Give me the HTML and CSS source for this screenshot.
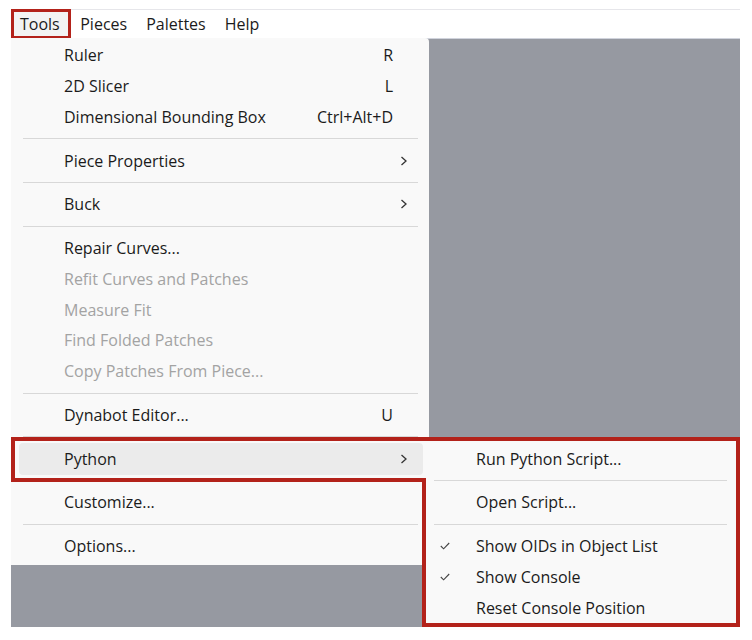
FILE: index.html
```html
<!DOCTYPE html>
<html>
<head>
<meta charset="utf-8">
<link rel="stylesheet" href="styles.css">
</head>
<body>
<div class="window">
  <div class="menubar">
    <div class="mb-item active">Tools</div>
    <div class="mb-item">Pieces</div>
    <div class="mb-item">Palettes</div>
    <div class="mb-item">Help</div>
  </div>
  <div class="canvas">
    <div class="menu">
      <div class="item"><span class="label">Ruler</span><span class="key">R</span><span class="arrow"></span></div>
      <div class="item"><span class="label">2D Slicer</span><span class="key">L</span><span class="arrow"></span></div>
      <div class="item"><span class="label">Dimensional Bounding Box</span><span class="key">Ctrl+Alt+D</span><span class="arrow"></span></div>
      <div class="sep"></div>
      <div class="item"><span class="label">Piece Properties</span><span class="key"></span><span class="arrow"><svg width="8" height="10" viewBox="0 0 8 10"><path d="M1.5 1 L6 5 L1.5 9" fill="none" stroke="#333" stroke-width="1.3"/></svg></span></div>
      <div class="sep"></div>
      <div class="item"><span class="label">Buck</span><span class="key"></span><span class="arrow"><svg width="8" height="10" viewBox="0 0 8 10"><path d="M1.5 1 L6 5 L1.5 9" fill="none" stroke="#333" stroke-width="1.3"/></svg></span></div>
      <div class="sep"></div>
      <div class="item"><span class="label">Repair Curves...</span><span class="key"></span><span class="arrow"></span></div>
      <div class="item disabled"><span class="label">Refit Curves and Patches</span><span class="key"></span><span class="arrow"></span></div>
      <div class="item disabled"><span class="label">Measure Fit</span><span class="key"></span><span class="arrow"></span></div>
      <div class="item disabled"><span class="label">Find Folded Patches</span><span class="key"></span><span class="arrow"></span></div>
      <div class="item disabled"><span class="label">Copy Patches From Piece...</span><span class="key"></span><span class="arrow"></span></div>
      <div class="sep"></div>
      <div class="item"><span class="label">Dynabot Editor...</span><span class="key">U</span><span class="arrow"></span></div>
      <div class="sep"></div>
      <div class="item hover"><span class="label">Python</span><span class="key"></span><span class="arrow"><svg width="8" height="10" viewBox="0 0 8 10"><path d="M1.5 1 L6 5 L1.5 9" fill="none" stroke="#333" stroke-width="1.3"/></svg></span></div>
      <div class="sep"></div>
      <div class="item"><span class="label">Customize...</span><span class="key"></span><span class="arrow"></span></div>
      <div class="sep"></div>
      <div class="item"><span class="label">Options...</span><span class="key"></span><span class="arrow"></span></div>
    </div>
    <div class="submenu">
      <div class="sitem"><span class="check"></span><span class="label">Run Python Script...</span></div>
      <div class="ssep"></div>
      <div class="sitem"><span class="check"></span><span class="label">Open Script...</span></div>
      <div class="ssep"></div>
      <div class="sitem"><span class="check"><svg width="10" height="8" viewBox="0 0 10 8"><path d="M0.8 4 L3.6 6.8 L9.2 1" fill="none" stroke="#444" stroke-width="1.1"/></svg></span><span class="label">Show OIDs in Object List</span></div>
      <div class="sitem"><span class="check"><svg width="10" height="8" viewBox="0 0 10 8"><path d="M0.8 4 L3.6 6.8 L9.2 1" fill="none" stroke="#444" stroke-width="1.1"/></svg></span><span class="label">Show Console</span></div>
      <div class="sitem"><span class="check"></span><span class="label">Reset Console Position</span></div>
    </div>
  </div>
</div>
<svg class="annot" width="752" height="640" viewBox="0 0 752 640">
  <polygon points="13,439 738,439 738,625 424,625 424,480 13,480" fill="none" stroke="#b3221a" stroke-width="4"/>
</svg>
</body>
</html>
```

FILE: styles.css
```css
html, body {
  margin: 0;
  padding: 0;
  background: #ffffff;
}
body {
  font-family: "Open Sans", "Noto Sans", sans-serif;
  color: #1b1b1b;
  width: 752px;
  height: 640px;
  position: relative;
  overflow: hidden;
}
.window {
  margin-left: 11px;
  margin-top: 9px;
  width: 729px;
}
.menubar {
  height: 28px;
  border-top: 1px solid #e6e6ea;
  display: flex;
  align-items: stretch;
  background: #ffffff;
  font-size: 16px;
}
.mb-item {
  display: flex;
  align-items: center;
  padding: 0 9.5px;
}
.mb-item.active {
  box-sizing: border-box;
  border: 3px solid #b3221a;
  margin-top: -1px;
  height: 30px;
  padding: 0 8px 0 6px;
  background: #f3f3f3;
}
.canvas {
  position: relative;
  height: 589px;
  background: #9699a1;
  box-shadow: inset 0 1px 0 #d0d3dc;
}
.menu {
  position: absolute;
  left: 0;
  top: 0;
  width: 418px;
  height: 527px;
  box-sizing: border-box;
  padding-top: 2px;
  background: #f9f9f9;
  border-top-right-radius: 4px;
  font-size: 16px;
}
.item {
  display: grid;
  grid-template-columns: 1fr auto 30px;
  align-items: center;
  height: 30.75px;
  margin: 0 6px 0 8px;
  padding-left: 45px;
  border-radius: 4px;
}
.item.disabled {
  color: #a3a3a3;
}
.item.hover {
  background: #ebebeb;
  height: 32px;
  margin-top: -0.6px;
  margin-bottom: -0.65px;
}
.key {
  text-align: right;
}
.arrow {
  display: flex;
  align-items: center;
  padding-left: 7px;
}
.sep {
  height: 13px;
  margin: 0 11px 0 12px;
  background: linear-gradient(#d8d8d8, #d8d8d8) no-repeat 0 6px / 100% 1px;
}
.submenu {
  position: absolute;
  left: 414px;
  top: 402px;
  width: 311px;
  height: 183px;
  box-sizing: border-box;
  padding-top: 3.25px;
  background: #f9f9f9;
  font-size: 16px;
}
.sitem {
  display: flex;
  align-items: center;
  height: 30.75px;
}
.check {
  width: 51px;
  display: flex;
  justify-content: flex-start;
  padding-left: 15px;
  box-sizing: border-box;
}
.ssep {
  height: 13px;
  margin: 0 9px;
  background: linear-gradient(#d8d8d8, #d8d8d8) no-repeat 0 6px / 100% 1px;
}
.annot {
  position: absolute;
  left: 0;
  top: 0;
  pointer-events: none;
}
```
